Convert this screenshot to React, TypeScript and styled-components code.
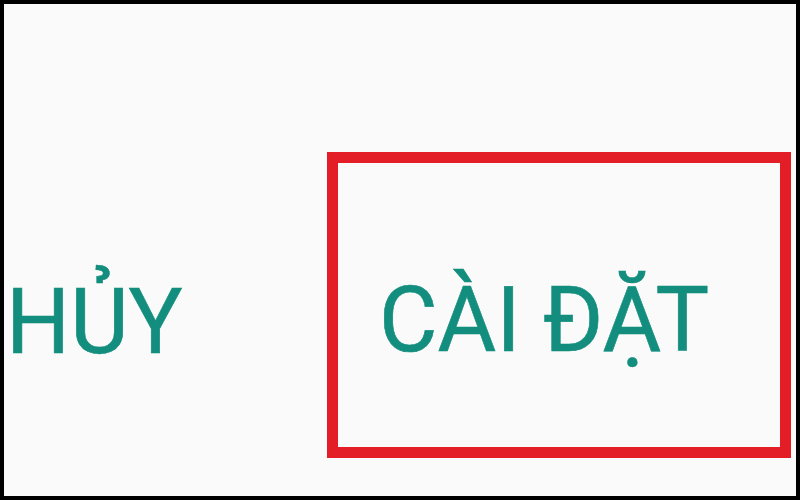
import styled, { createGlobalStyle } from 'styled-components';

const GlobalStyle = createGlobalStyle`
  html, body {
    margin: 0;
    padding: 0;
    background: #000;
  }
  * {
    box-sizing: border-box;
  }
`;

const Frame = styled.div`
  width: 800px;
  height: 500px;
  border: 4px solid #000;
  background: #fafafa;
  display: flex;
  align-items: flex-start;
  padding: 148px 5px 0 0;
  overflow: hidden;
`;

const TextButton = styled.div<{ $boxed?: boolean }>`
  font-family: Roboto, 'Noto Sans', sans-serif;
  font-size: 90px;
  line-height: 1;
  font-weight: 400;
  color: #138e7e;
  -webkit-text-stroke: 0.6px #138e7e;
  white-space: nowrap;
  cursor: pointer;
  border: ${(p) => (p.$boxed ? '11px solid #e41e26' : 'none')};
  width: ${(p) => (p.$boxed ? '464px' : 'auto')};
  height: ${(p) => (p.$boxed ? '306px' : 'auto')};
  padding: ${(p) => (p.$boxed ? '113px 0 0 41px' : '126px 0 0 0')};
`;

const CancelButton = styled(TextButton)`
  flex: 1;
  margin-left: 2px;
`;

export default function App() {
  return (
    <>
      <GlobalStyle />
      <Frame>
        <CancelButton role="button">HỦY</CancelButton>
        <TextButton role="button" $boxed>
          CÀI ĐẶT
        </TextButton>
      </Frame>
    </>
  );
}
